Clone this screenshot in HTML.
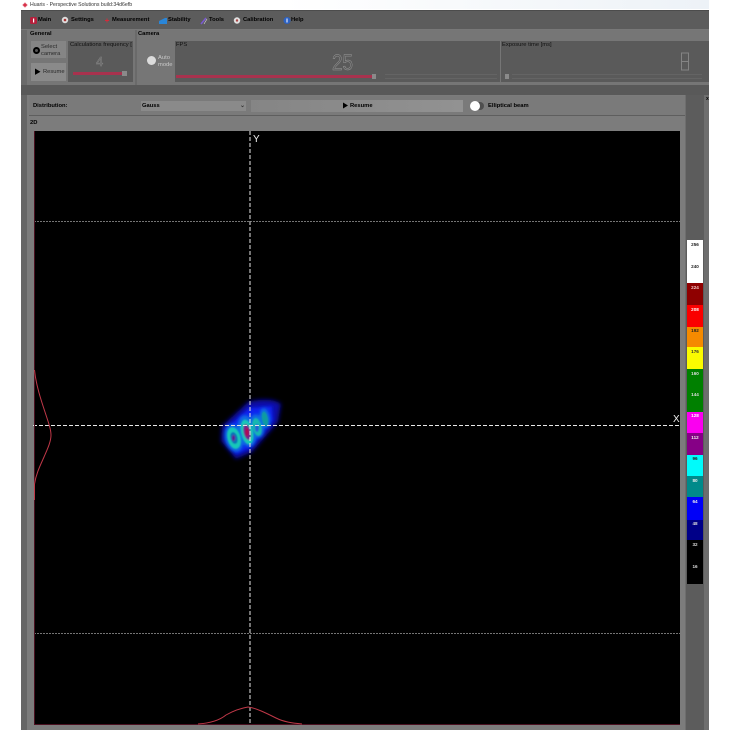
<!DOCTYPE html>
<html><head><meta charset="utf-8"><style>
html,body{margin:0;padding:0;background:#fff}
#r{position:relative;width:730px;height:730px;overflow:hidden;background:#fff;font-family:"Liberation Sans",sans-serif}
#u{position:absolute;left:0;top:0;width:730px;height:730px;filter:blur(.38px)}
#u div{position:absolute;box-sizing:border-box}
.t{position:absolute;white-space:nowrap;line-height:8px}
.m{font-weight:bold;font-size:5.8px;color:#000;top:16px}
.c{font-size:5.8px;color:#111}
.b{font-weight:bold;font-size:5.8px;color:#000}
.l{position:absolute;left:689px;width:12px;text-align:center;font-weight:bold;font-size:4.6px;line-height:6px;white-space:nowrap}
</style></head><body><div id="r"><div id="u">
<div style="left:0;top:0;width:709px;height:9px;background:linear-gradient(90deg,#fff 0,#fff 40%,#edf2f7 100%)"></div>
<span class="t" style="left:30px;top:1px;font-size:5.2px;color:#333">Huaris - Perspective Solutions build:34d6efb</span>
<div style="left:21px;top:10px;width:688px;height:720px;background:#6b6b6b"></div>
<div style="left:21px;top:10px;width:688px;height:20px;background:#5c5c5c;border-top:1px solid #4c4c4c;border-bottom:1px solid #787878"></div>
<svg style="position:absolute;left:0;top:0" width="730" height="100">
<circle cx="25" cy="5" r="1.8" fill="#d8324a"/><path d="M22.500 5h5M25 2.500v5" stroke="#d8324a" stroke-width=".7"/>
<rect x="30" y="17" width="7" height="7" rx="1.500" fill="#b5203c"/><rect x="33" y="18.500" width="1.200" height="4" fill="#fff"/>
<circle cx="65" cy="20" r="3.200" fill="#ddd"/><circle cx="65" cy="20" r="1.300" fill="#a33"/>
<path d="M105 20.500h4M107 18.500v4" stroke="#d42a3a" stroke-width="1"/>
<path d="M159 24v-3l6-3h2v6z" fill="#2a86d8"/>
<path d="M201 24l5-6" stroke="#7a5ad0" stroke-width="1.600"/><path d="M204 24l3-5" stroke="#ddd" stroke-width=".6"/>
<circle cx="237" cy="20.500" r="3.200" fill="#e0e0e0"/><circle cx="237" cy="20.500" r="1.200" fill="#a44"/>
<circle cx="287" cy="20.500" r="3.500" fill="#2c62c4"/><rect x="286.500" y="18.500" width="1" height="4" fill="#fff"/>
</svg>
<span class="t m" style="left:38px">Main</span>
<span class="t m" style="left:71px">Settings</span>
<span class="t m" style="left:112px">Measurement</span>
<span class="t m" style="left:168px">Stability</span>
<span class="t m" style="left:209px">Tools</span>
<span class="t m" style="left:243px">Calibration</span>
<span class="t m" style="left:291px">Help</span>

<div style="left:21px;top:30px;width:688px;height:55px;background:#6a6a6a"></div>
<div style="left:27px;top:30px;width:108px;height:55px;background:#767676"></div>
<div style="left:137px;top:30px;width:572px;height:55px;background:#767676"></div>
<span class="t b" style="left:30px;top:30px">General</span>
<span class="t b" style="left:138px;top:30px">Camera</span>

<div style="left:31px;top:41px;width:35px;height:17px;background:#858585"></div>
<div style="left:33px;top:47px;width:7px;height:7px;border-radius:50%;background:#555;border:2px solid #000"></div>
<span class="t c" style="left:41px;top:43px;color:#2a2a2a">Select</span>
<span class="t c" style="left:41px;top:50px;color:#2a2a2a">camera</span>
<div style="left:31px;top:63px;width:35px;height:18px;background:#8a8a8a"></div>
<svg style="position:absolute;left:35px;top:68px" width="7" height="8"><path d="M0 .5l5.500 3.200-5.500 3.200z" fill="#000"/></svg>
<span class="t c" style="left:43px;top:68px;color:#2a2a2a">Resume</span>

<div style="left:68px;top:41px;width:65px;height:41px;background:#5a5a5a"></div>
<span class="t c" style="left:70px;top:41px;width:62px;overflow:hidden">Calculations frequency [Hz]</span>
<svg style="position:absolute;left:68px;top:41px" width="65" height="41"><text x="28" y="25" font-family="Liberation Sans,sans-serif" font-size="13" fill="none" stroke="#8a8a8a" stroke-width=".45">4</text></svg>
<div style="left:73px;top:72px;width:50px;height:3px;background:#a8324e"></div>
<div style="left:122px;top:71px;width:5px;height:5px;background:#8a8a8a"></div>

<div style="left:147px;top:56px;width:9px;height:9px;border-radius:50%;background:#dcdcdc"></div>
<span class="t c" style="left:158px;top:54px;color:#c8c8c8">Auto</span>
<span class="t c" style="left:158px;top:61px;color:#c8c8c8">mode</span>

<div style="left:175px;top:41px;width:325px;height:41px;background:#5a5a5a"></div>
<span class="t c" style="left:176px;top:41px">FPS</span>
<svg style="position:absolute;left:325px;top:48px" width="35" height="28"><text x="7" y="22" font-family="Liberation Sans,sans-serif" font-size="22" textLength="21" lengthAdjust="spacingAndGlyphs" fill="none" stroke="#9a9a9a" stroke-width=".5">25</text></svg>
<div style="left:176px;top:75px;width:196px;height:3px;background:#a8324e"></div>
<div style="left:372px;top:74px;width:4px;height:5px;background:#8a8a8a"></div>
<div style="left:385px;top:74px;width:112px;height:1px;background:#646464"></div>
<div style="left:385px;top:78px;width:112px;height:1px;background:#646464"></div>

<div style="left:501px;top:41px;width:208px;height:41px;background:#5a5a5a"></div>
<span class="t c" style="left:502px;top:41px">Exposure time [ms]</span>
<svg style="position:absolute;left:676px;top:48px" width="18" height="28"><rect x="5.500" y="5" width="7" height="8.500" fill="none" stroke="#848484" stroke-width="1"/><rect x="5.500" y="13.500" width="7" height="8.500" fill="none" stroke="#848484" stroke-width="1"/></svg>
<div style="left:505px;top:74px;width:4px;height:5px;background:#8a8a8a"></div>
<div style="left:512px;top:74px;width:190px;height:1px;background:#646464"></div>
<div style="left:512px;top:78px;width:190px;height:1px;background:#646464"></div>

<div style="left:21px;top:85px;width:688px;height:10px;background:#595959"></div>
<div style="left:21px;top:95px;width:6px;height:635px;background:#666"></div>
<div style="left:27px;top:95px;width:658px;height:635px;background:#7c7c7c"></div>
<div style="left:29px;top:96px;width:656px;height:20px;background:#7a7a7a;border-bottom:1px solid #5e5e5e"></div>
<span class="t b" style="left:33px;top:102px">Distribution:</span>
<div style="left:141px;top:101px;width:105px;height:10px;background:#8a8a8a"></div>
<span class="t b" style="left:142px;top:102px">Gauss</span>
<span class="t b" style="left:240px;top:102px;color:#333">&#8964;</span>
<div style="left:251px;top:100px;width:212px;height:12px;background:linear-gradient(90deg,#858585,#929292)"></div>
<svg style="position:absolute;left:343px;top:102px" width="6" height="8"><path d="M0 .5l5 3-5 3z" fill="#000"/></svg>
<span class="t b" style="left:350px;top:102px">Resume</span>
<div style="left:472px;top:102px;width:12px;height:8px;border-radius:4px;background:#4e4e4e"></div>
<div style="left:470px;top:101px;width:10px;height:10px;border-radius:50%;background:#fff"></div>
<span class="t b" style="left:488px;top:102px">Elliptical beam</span>
<span class="t b" style="left:30px;top:119px">2D</span>

<div style="left:34px;top:131px;width:646px;height:594px;background:#000"></div>
<svg style="position:absolute;left:0;top:0" width="730" height="730">
<defs>
<filter id="f1" x="-40%" y="-40%" width="180%" height="180%"><feGaussianBlur stdDeviation="2"/></filter>
<filter id="f2" x="-40%" y="-40%" width="180%" height="180%"><feGaussianBlur stdDeviation="1.500"/></filter>
<filter id="f3" x="-40%" y="-40%" width="180%" height="180%"><feGaussianBlur stdDeviation=".8"/></filter>
</defs>
<path d="M222 426L248 402C258 399 274 398 281 404L278 422L252 452L236 459L221 441Z" fill="#0808a8" filter="url(#f1)"/>
<path d="M227 428L249 408L272 406L273 420L250 448L236 454L226 440Z" fill="#0a24f0" filter="url(#f2)"/>
<g filter="url(#f2)" fill="#0a70e0">
<ellipse cx="234" cy="438" rx="9" ry="14" transform="rotate(-15 234 438)"/>
<ellipse cx="247" cy="431" rx="9" ry="16" transform="rotate(-12 247 431)"/>
<ellipse cx="257" cy="426" rx="7" ry="12" transform="rotate(-12 257 426)"/>
<ellipse cx="265" cy="418" rx="5" ry="10" transform="rotate(-10 265 418)"/>
</g>
<g filter="url(#f3)">
<ellipse cx="234" cy="438" rx="6.500" ry="11" transform="rotate(-15 234 438)" fill="#18c8b8"/>
<ellipse cx="247" cy="432" rx="6" ry="12.500" transform="rotate(-12 247 432)" fill="#18c8b8"/>
<ellipse cx="257" cy="427" rx="4.500" ry="9" transform="rotate(-12 257 427)" fill="#14b8b0"/>
<ellipse cx="265" cy="419" rx="3" ry="7.500" transform="rotate(-10 265 419)" fill="#0e9ca0"/>
<ellipse cx="234" cy="438" rx="3.500" ry="6" transform="rotate(-15 234 438)" fill="#1070b8"/>
<ellipse cx="247" cy="432" rx="3.500" ry="8" transform="rotate(-12 247 432)" fill="#702090"/>
<ellipse cx="257" cy="428" rx="2" ry="4" fill="#2060d8"/>
<ellipse cx="233.500" cy="438" rx="1.600" ry="3" fill="#601890"/>
<ellipse cx="247" cy="432" rx="1.800" ry="4.500" fill="#b01050"/>
</g>
<path d="M250 131V725" stroke="#e8e8e8" stroke-width="1" stroke-dasharray="4 2"/>
<path d="M33 425.500H680" stroke="#e8e8e8" stroke-width="1" stroke-dasharray="4 2"/>
<path d="M34 221.500H680" stroke="#9a9a9a" stroke-width=".8" stroke-dasharray="2 1"/>
<path d="M34 633.500H680" stroke="#9a9a9a" stroke-width=".8" stroke-dasharray="2 1"/>
<path d="M34.500 131V725M34 724.500H680" stroke="#4a1020" stroke-width="1"/>
<path d="M34.500 370C36 385 41 400 45 412C49 424 51 430 51 435C51 442 47 450 44 457C40 466 36 474 34.500 484V500" fill="none" stroke="#c03848" stroke-width="1"/>
<path d="M198 724C212 723 220 720 226 715C233 711 242 708 248 707C256 708 266 713 276 718C284 722 292 723 302 724" fill="none" stroke="#c03848" stroke-width="1"/>
<text x="253" y="142" font-family="Liberation Sans,sans-serif" font-size="10" fill="#eee">Y</text>
<text x="673" y="422" font-family="Liberation Sans,sans-serif" font-size="10" fill="#eee">X</text>
</svg>

<div style="left:685px;top:95px;width:19px;height:635px;background:#5c5c5c;border-left:1px solid #6e6e6e"></div>
<div style="left:704px;top:95px;width:5px;height:635px;background:#6e6e6e"></div>
<span class="t b" style="left:706px;top:95px;font-size:5px">x</span>
<div style="left:687px;top:240px;width:16px;height:344px;background:linear-gradient(180deg,#fff 0 43px,#8f0000 43px 65px,#fa0000 65px 87px,#f58a00 87px 107px,#fbfb00 107px 129px,#008000 129px 172px,#fa00f0 172px 193px,#860086 193px 215px,#00fbfb 215px 236px,#008a8a 236px 257px,#0000f8 257px 280px,#000088 280px 300px,#000 300px 344px)"></div>
<span class="l" style="top:242px;color:#222">256</span>
<span class="l" style="top:264px;color:#222">240</span>
<span class="l" style="top:285px;color:#f6c8c8">224</span>
<span class="l" style="top:307px;color:#fff">208</span>
<span class="l" style="top:328px;color:#222">192</span>
<span class="l" style="top:349px;color:#333">176</span>
<span class="l" style="top:371px;color:#ddd">160</span>
<span class="l" style="top:392px;color:#ddd">144</span>
<span class="l" style="top:413px;color:#fff">128</span>
<span class="l" style="top:435px;color:#eee">112</span>
<span class="l" style="top:456px;color:#222">96</span>
<span class="l" style="top:478px;color:#eee">80</span>
<span class="l" style="top:499px;color:#eee">64</span>
<span class="l" style="top:521px;color:#ddd">48</span>
<span class="l" style="top:542px;color:#ddd">32</span>
<span class="l" style="top:564px;color:#ddd">16</span>
</div></div></body></html>
